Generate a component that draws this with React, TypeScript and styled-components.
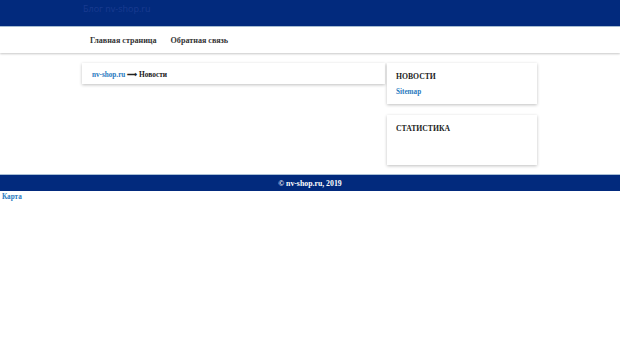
import React from "react";
import styled, { createGlobalStyle } from "styled-components";

const Global = createGlobalStyle`
  html, body { margin: 0; padding: 0; background: #ffffff; }
  body { font-family: "Liberation Serif", "Times New Roman", serif; font-size: 10px; color: #222; }
  a { text-decoration: none; }
`;

const Header = styled.header`
  background: #022a7d;
  height: 26px;
  border-bottom: 1px solid #a9bfd6;
  display: flex;
  align-items: center;
`;

const Inner = styled.div`
  width: 455px;
  margin: 0 0 0 82px;
`;

const Brand = styled.div`
  font-family: "Open Sans", "Liberation Sans", sans-serif;
  font-size: 9px;
  color: #193a90;
  padding-left: 1px;
  margin-top: -10px;
`;

const Nav = styled.nav`
  background: #fff;
  height: 26px;
  box-shadow: 0 1px 2px rgba(0, 0, 0, 0.22);
  display: flex;
  align-items: center;
`;

const NavList = styled.div`
  display: flex;
  gap: 14px;
  padding-left: 8px;
`;

const NavLink = styled.a`
  color: #333;
  font-size: 8.1px;
  font-weight: bold;
`;

const Main = styled.div`
  display: flex;
  gap: 2px;
  margin: 10px 0 0 82px;
  width: 455px;
  height: 111px;
`;

const Column = styled.div`
  flex: 1;
`;

const Side = styled.div`
  width: 150px;
  display: flex;
  flex-direction: column;
  gap: 11px;
`;

const Card = styled.div<{ $h: number }>`
  background: #fff;
  height: ${(p) => p.$h}px;
  box-sizing: border-box;
  box-shadow: 0 1px 3px rgba(0, 0, 0, 0.25);
  padding: 6px 9px;
`;

const Crumb = styled.div`
  font-weight: bold;
  font-size: 7.4px;
  color: #222;
  padding: 1px 1px 0;
`;

const BlueLink = styled.a`
  color: #2a7ac0;
  font-weight: bold;
  font-size: 7.2px;
`;

const Title = styled.div`
  font-weight: bold;
  font-size: 7.7px;
  color: #222;
  margin: 3px 0 4px;
`;

const Footer = styled.footer`
  background: #022a7d;
  border-top: 1px solid #a9bfd6;
  height: 16px;
  display: flex;
  align-items: center;
  justify-content: center;
  color: #fff;
  font-weight: bold;
  font-size: 7.8px;
`;

const MapLink = styled.a`
  display: block;
  margin: 2px 0 0 2px;
  color: #2a7ac0;
  font-weight: bold;
  font-size: 7.2px;
`;

export default function App() {
  return (
    <>
      <Global />
      <Header>
        <Inner>
          <Brand>Блог nv-shop.ru</Brand>
        </Inner>
      </Header>
      <Nav>
        <Inner>
          <NavList>
            <NavLink>Главная страница</NavLink>
            <NavLink>Обратная связь</NavLink>
          </NavList>
        </Inner>
      </Nav>
      <Main>
        <Column>
          <Card $h={21}>
            <Crumb>
              <BlueLink>nv-shop.ru</BlueLink> ⟶ Новости
            </Crumb>
          </Card>
        </Column>
        <Side>
          <Card $h={41}>
            <Title>НОВОСТИ</Title>
            <BlueLink>Sitemap</BlueLink>
          </Card>
          <Card $h={50}>
            <Title>СТАТИСТИКА</Title>
          </Card>
        </Side>
      </Main>
      <Footer>© nv-shop.ru, 2019</Footer>
      <MapLink>Карта</MapLink>
    </>
  );
}
